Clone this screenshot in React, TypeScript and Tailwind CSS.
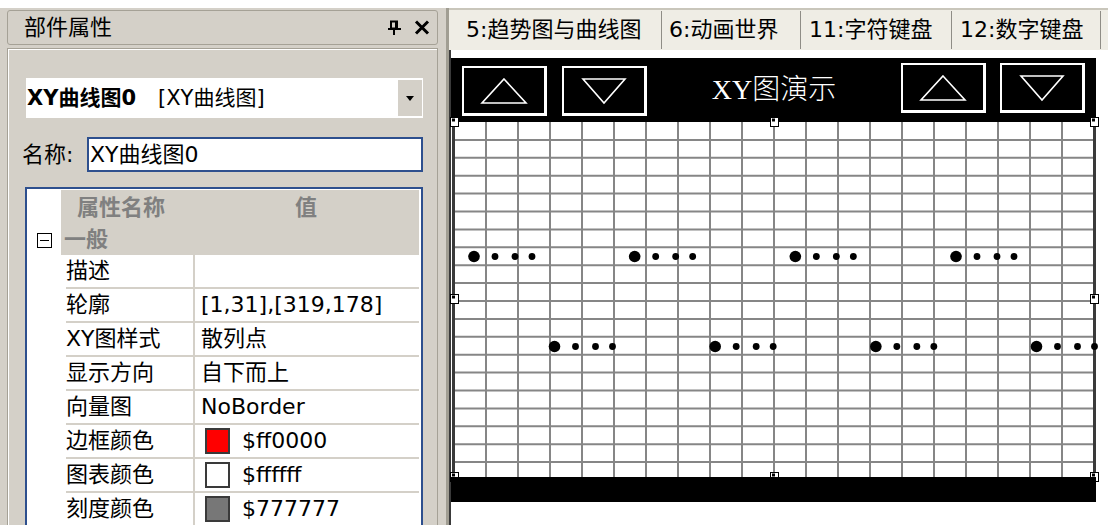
import React from 'react';

const FONT = "font-['DejaVu_Sans','Noto_Sans_CJK_SC',sans-serif]";

interface PropRow {
  name: string;
  value: string;
  swatch?: string;
}

const rows: PropRow[] = [
  { name: '描述', value: '' },
  { name: '轮廓', value: '[1,31],[319,178]' },
  { name: 'XY图样式', value: '散列点' },
  { name: '显示方向', value: '自下而上' },
  { name: '向量图', value: 'NoBorder' },
  { name: '边框颜色', value: '$ff0000', swatch: 'bg-[#ff0000]' },
  { name: '图表颜色', value: '$ffffff', swatch: 'bg-white' },
  { name: '刻度颜色', value: '$777777', swatch: 'bg-[#777777]' },
];

const tabs = [
  { label: '5:趋势图与曲线图', cls: 'w-[213px] pl-[17px]' },
  { label: '6:动画世界', cls: 'w-[139px] pl-[7px]' },
  { label: '11:字符键盘', cls: 'w-[151px] pl-[8px]' },
  { label: '12:数字键盘', cls: 'w-[149px] pl-[8px]' },
];

const PinIcon = () => (
  <svg width="15" height="15" viewBox="0 0 15 15">
    <rect x="4" y="1.5" width="6" height="7" fill="none" stroke="#000" strokeWidth="2" />
    <line x1="9" y1="1" x2="9" y2="9" stroke="#000" strokeWidth="2" />
    <line x1="1" y1="9" x2="14" y2="9" stroke="#000" strokeWidth="2" />
    <line x1="7" y1="9" x2="7" y2="15" stroke="#000" strokeWidth="2" />
  </svg>
);

const CloseIcon = () => (
  <svg width="16" height="15" viewBox="0 0 16 15">
    <path d="M2 1.5 L14 13.5 M14 1.5 L2 13.5" stroke="#000" strokeWidth="3" />
  </svg>
);

const ArrowButton = ({ up, className }: { up: boolean; className: string }) => (
  <div
    className={`w-[85px] h-[50px] border-2 border-r-[3px] border-b-[3px] border-white bg-black flex items-center justify-center ${className}`}
  >
    <svg width="48" height="28" viewBox="0 0 48 28">
      {up ? (
        <polygon points="24,2 46,26 2,26" fill="none" stroke="#fff" strokeWidth="1.6" />
      ) : (
        <polygon points="3,2 45,2 24,26" fill="none" stroke="#fff" strokeWidth="1.6" />
      )}
    </svg>
  </div>
);

const GridChart = () => {
  const W = 645;
  const H = 355;
  const vx = Array.from({ length: 21 }, (_, k) => 3 + 32 * k);
  const hy = Array.from({ length: 20 }, (_, k) => 17.9 * k).filter((y) => y > 0 && y < H);
  const group = 160.67;
  const row1 = [0, 1, 2, 3].map((i) => 23 + group * i);
  const row2 = [0, 1, 2, 3].map((i) => 103.5 + group * i);
  const offsets = [21, 41, 58];
  const handles = [
    [3, 0],
    [323, 0],
    [643, 0],
    [3, 177],
    [643, 177],
    [3, 355],
    [323, 355],
    [643, 355],
  ];
  return (
    <svg width={W} height={H} viewBox={`0 0 ${W} ${H}`} className="block overflow-visible">
      <rect x="0" y="0" width={W} height={H} fill="#fff" />
      {hy.map((y) => (
        <line key={`h${y}`} x1={3} x2={643} y1={y} y2={y} stroke="#868686" strokeWidth="2" />
      ))}
      {vx.slice(1, -1).map((x) => (
        <line key={`v${x}`} x1={x} x2={x} y1={0} y2={H} stroke="#868686" strokeWidth="2" />
      ))}
      <line x1={2.5} x2={2.5} y1={0} y2={H} stroke="#3a3a3a" strokeWidth="3" />
      <line x1={643.5} x2={643.5} y1={0} y2={H} stroke="#3a3a3a" strokeWidth="3" />
      {[
        { xs: row1, y: 134.5 },
        { xs: row2, y: 224.5 },
      ].map(({ xs, y }) =>
        xs.map((x) => (
          <g key={`d${x}-${y}`}>
            <circle cx={x} cy={y} r="5.8" fill="#000" />
            {offsets.map((o) => (
              <circle key={o} cx={x + o} cy={y} r="3.4" fill="#000" />
            ))}
          </g>
        ))
      )}
      {handles.map(([x, y]) => (
        <g key={`s${x}-${y}`}>
          <rect x={x - 3.5} y={y - 4.5} width="8" height="9" fill="#fff" stroke="#000" strokeWidth="1" />
          <rect x={x - 2} y={y - 3.5} width="3" height="3" fill="#000" />
        </g>
      ))}
    </svg>
  );
};

const App: React.FC = () => {
  return (
    <div className={`w-[1108px] h-[525px] bg-white pt-[8px] flex overflow-hidden text-black ${FONT}`}>
      {/* left: property panel */}
      <div className="w-[446px] shrink-0 h-full bg-[#d4d0c8] pt-[2px] pl-[7px] pr-[8px] flex flex-col">
        <div className="h-[35px] shrink-0 border border-[#a5a196] rounded-[3px] flex items-center pl-[16px] pr-[7px]">
          <span className="text-[22px] leading-none">部件属性</span>
          <div className="ml-auto flex items-center gap-[12px]">
            <PinIcon />
            <CloseIcon />
          </div>
        </div>

        <div className="mt-[3px] flex-1 border border-b-0 border-[#a5a196] shadow-[inset_1px_1px_0_#fff] pt-[29px] pl-[14px] pr-[14px] flex flex-col">
          <div className="ml-[4px] h-[40px] bg-white flex items-center pl-[1px] pr-[1px]">
            <span className="text-[21px] leading-none font-bold">XY曲线图0</span>
            <span className="text-[21px] leading-none ml-[22px]">[XY曲线图]</span>
            <div className="ml-auto w-[24px] h-[36px] bg-[#d4d0c8] flex items-center justify-center">
              <svg width="8" height="5" viewBox="0 0 8 5">
                <polygon points="0,0 8,0 4,5" fill="#000" />
              </svg>
            </div>
          </div>

          <div className="mt-[19px] h-[35px] flex items-center">
            <span className="text-[22px] leading-none w-[65px]">名称:</span>
            <div className="flex-1 h-full border-2 border-[#2d4f8e] bg-white flex items-center pl-[1px]">
              <span className="text-[22px] leading-none">XY曲线图0</span>
            </div>
          </div>

          <div className="mt-[15px] ml-[3px] flex-1 border-2 border-b-0 border-[#2d4f8e] bg-white pt-[1px] pr-[2px] flex flex-col">
            <div className="flex h-[65px] shrink-0">
              <div className="w-[34px] flex items-end justify-center pb-[7px]">
                <div className="w-[15px] h-[15px] border-[1.5px] border-black flex items-center justify-center">
                  <div className="w-[9px] h-[1.5px] bg-black" />
                </div>
              </div>
              <div className="flex-1 bg-[#d4d0c8] flex flex-col text-[#808080] font-bold text-[22px] leading-none">
                <div className="h-[35px] flex items-center">
                  <span className="pl-[16px] w-[132px]">属性名称</span>
                  <span className="flex-1 text-center">值</span>
                </div>
                <div className="h-[30px] flex items-center pl-[3px]">一般</div>
              </div>
            </div>
            {rows.map((r) => (
              <div key={r.name} className="flex h-[34px] shrink-0">
                <div className="w-[39px]" />
                <div className="w-[129px] border-b-2 border-r-2 border-[#d4d0c8] flex items-center text-[22px] leading-none">
                  {r.name}
                </div>
                <div className="flex-1 border-b-2 border-[#d4d0c8] flex items-center pl-[6px] text-[22px] leading-none">
                  {r.swatch && (
                    <div className={`w-[25px] h-[26px] border-2 border-[#3a3a3a] mr-[12px] ml-[4px] ${r.swatch}`} />
                  )}
                  {r.value}
                </div>
              </div>
            ))}
          </div>
        </div>
      </div>

      {/* right: designer */}
      <div className="flex-1 min-w-0 h-full flex flex-col border-l-[3px] border-[#a09d92]">
        <div className="h-[42px] shrink-0 bg-[#efede5] border-t-2 border-[#c9c6bb] flex items-center">
          {tabs.map((t) => (
            <div
              key={t.label}
              className={`${t.cls} shrink-0 h-[38px] flex items-center border-r border-[#8f8d86] text-[22px] leading-none whitespace-nowrap`}
            >
              {t.label}
            </div>
          ))}
        </div>
        <div className="flex-1 bg-white pt-[8px] border-l-2 border-[#3a3a3a]">
          <div className="w-[645px] flex flex-col">
            <div className="h-[64px] bg-black flex items-start pl-[11px] pr-[11px]">
              <ArrowButton up className="mt-[8px]" />
              <ArrowButton up={false} className="mt-[8px] ml-[15px]" />
              <div className="flex-1 h-full flex items-center justify-center text-white text-[28px] leading-none font-['Liberation_Serif','Noto_Sans_CJK_SC',serif] font-light">
                XY图演示
              </div>
              <ArrowButton up className="mt-[5px]" />
              <ArrowButton up={false} className="mt-[5px] ml-[14px]" />
            </div>
            <GridChart />
            <div className="h-[25px] bg-black" />
          </div>
        </div>
      </div>
    </div>
  );
};

export default App;
